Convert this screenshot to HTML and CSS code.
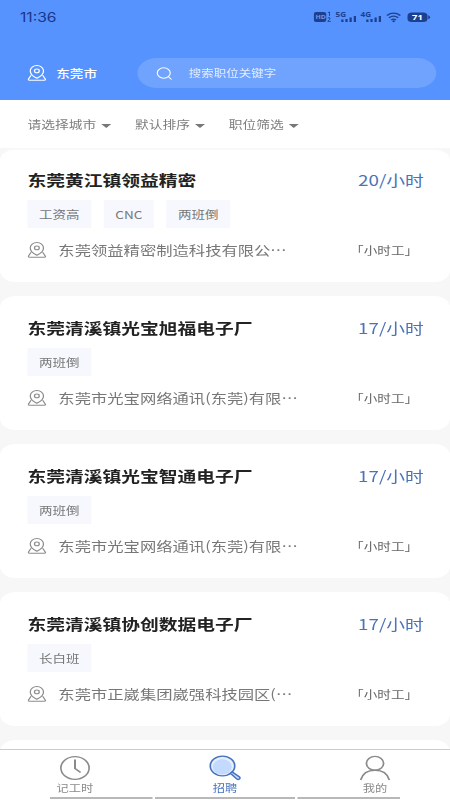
FILE: index.html
```html
<!DOCTYPE html>
<html lang="zh-CN">
<head>
<meta charset="utf-8">
<title>招聘</title>
<link rel="stylesheet" href="styles.css">
</head>
<body>
<svg class="defs" width="0" height="0">
  <symbol id="pin" viewBox="0 0 15 16">
    <g fill="none" stroke="currentColor" stroke-width="1" stroke-linejoin="round" stroke-linecap="round">
      <path d="M7.500 13.200C5 11.700 2.200 9.300 2.200 5.900a5.300 5.300 0 0 1 10.600 0c0 3.400-2.800 5.800-5.300 7.300z"/>
      <circle cx="7.500" cy="5.900" r="1.900"/>
      <path d="M2.700 10.600L.7 14.300q-.2 1 .7 1h12.200q.9 0 .7-1l-2-3.700"/>
    </g>
  </symbol>
</svg>
<div class="screen">
  <header class="header">
    <div class="status">
      <span class="time">11:36</span>
      <svg class="status-icons" width="95" height="14" viewBox="0 0 95 14">
        <g fill="#1d3f8f">
          <rect x="0" y="2" width="10" height="10" rx="2"/>
          <text x="1.400" y="9.300" font-size="5.500" fill="#6f9cf0">HD</text>
          <path d="M11.300 2.700l1.300-.7v4M11.200 8q1-.8 1.900 0 .4.800-1.900 3.400h2.400" fill="none" stroke="#1d3f8f" stroke-width=".8"/>
          <text x="17.500" y="6.500" font-size="6.500">5G</text>
          <path d="M22 9.500h1.800V12H22zM25.300 9h1.800v3h-1.800zM28.600 7.500h1.800V12h-1.800zM32 6h1.800v6H32z"/>
          <text x="37.500" y="6.500" font-size="6.500">4G</text>
          <path d="M42 9.500h1.800V12H42zM45.300 9h1.800v3h-1.800zM48.600 7.500h1.800V12h-1.800zM52 6h1.800v6H52z"/>
          <rect x="75" y="2.500" width="16" height="9.500" rx="3.500"/>
          <path d="M91.600 5.200q1.400.4 1.400 2t-1.400 2z"/>
          <text x="78.700" y="10" font-size="7.500" fill="#fff">71</text>
        </g>
        <g fill="none" stroke="#1d3f8f" stroke-width="1.300">
          <path d="M58.500 5.500q5.300-4.600 10.800 0M60.200 7.700q3.700-3.200 7.400 0M62 9.900q1.900-1.600 3.800 0"/>
        </g>
        <circle cx="63.900" cy="11.200" r="1" fill="#1d3f8f"/>
      </svg>
    </div>
    <div class="topbar">
      <svg class="pin" width="15" height="16"><use href="#pin"/></svg>
      <span class="city">东莞市</span>
      <div class="search">
        <svg width="13" height="13" viewBox="0 0 13 13" fill="none" stroke="#fff" stroke-width=".9" stroke-linecap="round"><circle cx="6" cy="6" r="5.200"/><path d="M10 10l2 2.200"/></svg>
        <span>搜索职位关键字</span>
      </div>
    </div>
  </header>
  <nav class="filters">
    <span class="filter">请选择城市</span>
    <span class="filter">默认排序</span>
    <span class="filter">职位筛选</span>
  </nav>
  <main class="list">
    <article class="card">
      <div class="row"><h2>东莞黄江镇领益精密</h2><span class="price">20/小时</span></div>
      <div class="tags"><span>工资高</span><span>CNC</span><span>两班倒</span></div>
      <div class="place"><svg class="pin" width="15" height="16"><use href="#pin"/></svg><span class="company">东莞领益精密制造科技有限公…</span><span class="kind">「小时工」</span></div>
    </article>
    <article class="card">
      <div class="row"><h2>东莞清溪镇光宝旭福电子厂</h2><span class="price">17/小时</span></div>
      <div class="tags"><span>两班倒</span></div>
      <div class="place"><svg class="pin" width="15" height="16"><use href="#pin"/></svg><span class="company">东莞市光宝网络通讯(东莞)有限…</span><span class="kind">「小时工」</span></div>
    </article>
    <article class="card">
      <div class="row"><h2>东莞清溪镇光宝智通电子厂</h2><span class="price">17/小时</span></div>
      <div class="tags"><span>两班倒</span></div>
      <div class="place"><svg class="pin" width="15" height="16"><use href="#pin"/></svg><span class="company">东莞市光宝网络通讯(东莞)有限…</span><span class="kind">「小时工」</span></div>
    </article>
    <article class="card">
      <div class="row"><h2>东莞清溪镇协创数据电子厂</h2><span class="price">17/小时</span></div>
      <div class="tags"><span>长白班</span></div>
      <div class="place"><svg class="pin" width="15" height="16"><use href="#pin"/></svg><span class="company">东莞市正崴集团崴强科技园区(…</span><span class="kind">「小时工」</span></div>
    </article>
    <article class="card"></article>
  </main>
  <footer class="tabs">
    <div class="tab">
      <svg width="26" height="26" viewBox="0 0 26 26" fill="none" stroke="currentColor" stroke-width="1.300"><circle cx="13" cy="13" r="11.300"/><path d="M13 4.500v9l4.500 4" stroke-width="1.600"/></svg>
      <span>记工时</span>
    </div>
    <div class="tab active">
      <svg width="26" height="26" viewBox="0 0 26 26" fill="none" stroke="currentColor" stroke-width="1.300"><circle cx="11" cy="11" r="9.800" fill="#e4eeff"/><circle cx="10.800" cy="11.800" r="7.600" fill="#c3d9fd" stroke="none"/><path d="M17.300 18.300l1.400-1.400 6 5.100q.8 1.200-.2 2.100-1 .8-2 0z" fill="#c3d9fd"/></svg>
      <span>招聘</span>
    </div>
    <div class="tab">
      <svg width="26" height="26" viewBox="0 0 26 26" fill="none" stroke="currentColor" stroke-width="1.400"><circle cx="13" cy="8.300" r="6.900"/><path d="M1.500 25C3 18.500 7.500 15.200 13 15.200S23 18.500 24.500 25"/></svg>
      <span>我的</span>
    </div>
  </footer>
  <div class="bars"><i></i><i></i><i></i></div>
</div>
</body>
</html>
```

FILE: styles.css
```css
* { box-sizing: border-box; }
html, body { margin: 0; height: 800px; overflow: hidden; }
body { background: #f7f7f7; font-family: "Noto Sans CJK SC", sans-serif; }
.defs { display: block; position: absolute; }

/* 360-unit wide phone layout, widened to fill the window */
.screen {
  width: 360px;
  height: 800px;
  transform: scaleX(1.25);
  transform-origin: 0 0;
  display: flex;
  flex-direction: column;
  overflow: hidden;
}
svg { display: block; flex: none; }

.header { height: 100px; background: #5793fe; flex: none; }
.status { height: 36px; padding: 10px 14px 0 16px; display: flex; justify-content: space-between; }
.time { font: 400 12.5px/16px Inter, sans-serif; color: #17368a; }
.status-icons { font-family: "Open Sans", sans-serif; font-weight: 700; }
.topbar { display: flex; align-items: center; margin-top: 22px; height: 30px; padding-left: 21.5px; color: #fff; }
.city { font-size: 10.900px; font-weight: 500; margin-left: 8.500px; width: 65px; line-height: 16px; }
.search {
  width: 239px; height: 30px; border-radius: 15px;
  background: #70a3fe; display: flex; align-items: center;
  padding-left: 15px; font-size: 10px; color: #e3edff;
}
.search span { margin-left: 13px; margin-top: -1px; }

.filters { height: 48px; background: #fff; flex: none; display: flex; align-items: center; gap: 19px; padding: 0 0 0 22px; }
.filter { display: flex; align-items: center; gap: 4px; font-size: 11px; line-height: 16px; color: #7e7e7e; }
.filter::after { content: ""; border: 4px solid transparent; border-top-color: #777; border-bottom: 0; margin-top: 4px; }

.list { flex: 1; min-height: 0; overflow: hidden; display: flex; flex-direction: column; gap: 14px; }
.card { height: 134px; flex: none; background: #fff; border-radius: 12px; padding: 20px 21px 0 22px; }
.card:first-child { border-top: 2px solid #f8f8f8; padding-top: 18px; }
.row { display: flex; justify-content: space-between; height: 23px; line-height: 23px; }
h2 { margin: 0; font-size: 15px; font-weight: 700; color: #222; }
.price { font-size: 15px; color: #4c73b5; }
.tags { display: flex; gap: 10px; height: 28px; margin-top: 9px; }
.tags span { background: #f6f8fe; padding: 0 9.300px; font-size: 10.800px; line-height: 28px; color: #777; }
.place { display: flex; align-items: center; margin-top: 12px; height: 20px; color: #777; line-height: 20px; }
.place .pin { color: #8c8c8c; }
.company { font-size: 13.050px; margin-left: 9.700px; flex: 1; white-space: nowrap; }
.kind { font-size: 10.900px; margin-right: 4.500px; color: #666; }

.tabs { height: 47px; flex: none; background: #fff; border-top: 1px solid #ccc; display: flex; }
.tab { flex: 1; display: flex; flex-direction: column; align-items: center; padding-top: 5px; color: #8a8a8a; }
.tab span { font-size: 9.800px; line-height: 14px; }
.tab.active { color: #4571bd; }
.bars { height: 4px; flex: none; background: #fff; display: flex; gap: 2px; padding: 0 40px 1px; }
.bars i { background: #b8b8b8; flex: 82; margin-top: 1px; }
.bars i:nth-child(2) { flex: 112; }
```
